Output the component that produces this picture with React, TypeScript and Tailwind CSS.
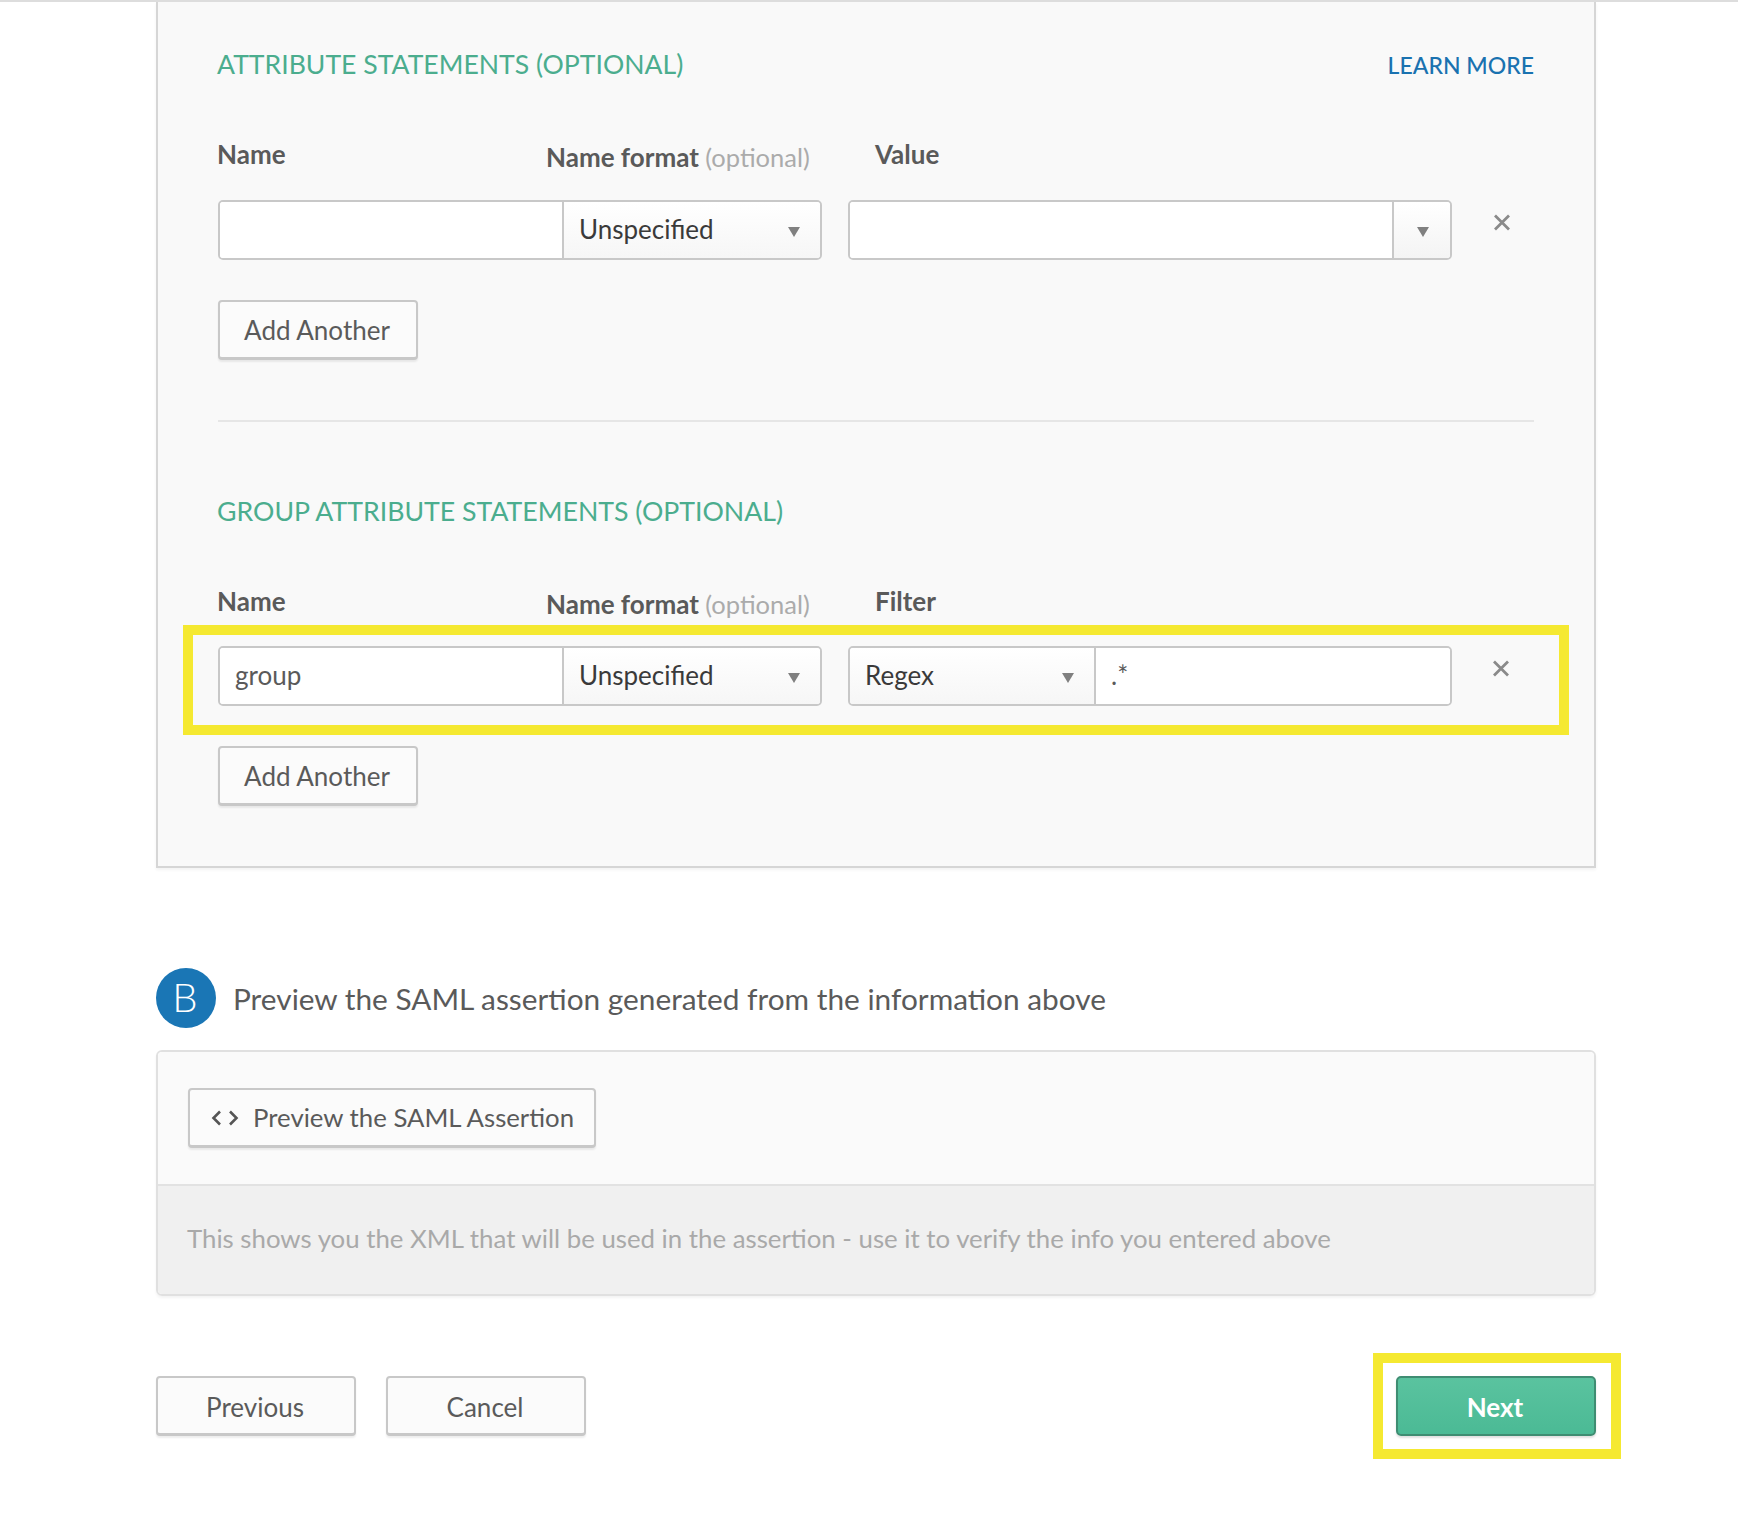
const font = "font-['Lato','Liberation_Sans',sans-serif]";

function Arrow() {
  return (
    <svg width="12" height="10" viewBox="0 0 12 10" className="shrink-0">
      <path d="M0 0H12L6 10Z" fill="#808080" />
    </svg>
  );
}

function Close({ ml }: { ml: string }) {
  return (
    <svg width="18" height="17" viewBox="0 0 18 17" className={`${ml} mt-[14px] shrink-0`}>
      <path d="M2 1.5L16 15.5M16 1.5L2 15.5" stroke="#8a8a8a" strokeWidth="2.8" fill="none" />
    </svg>
  );
}

function CodeIcon() {
  return (
    <svg width="28" height="16" viewBox="0 0 28 16" className="shrink-0">
      <path d="M9 1.5L2.5 8L9 14.5M19 1.5L25.5 8L19 14.5" stroke="#555" strokeWidth="2.6" fill="none" />
    </svg>
  );
}

function FormatSelect({ className, label }: { className: string; label: string }) {
  return (
    <div className={`${className} h-full flex items-center justify-between bg-gradient-to-b from-white to-[#f6f6f6] pl-[15px] text-[26px] text-[#3a3a3a]`}>
      <span className="-mt-[2px]">{label}</span>
      <span className="mr-[20px] mt-[3px]">
        <Arrow />
      </span>
    </div>
  );
}

function AddAnother() {
  return (
    <button className="w-[200px] h-[60px] pt-[2px] rounded-[4px] border-2 border-[#c8c8c8] border-b-[3px] bg-[#fbfbfb] shadow-[0_2px_2px_rgba(0,0,0,0.07)] text-[26px] text-[#5a5a5a]">
      <span className="-ml-[2px]">Add Another</span>
    </button>
  );
}

function Labels({ last }: { last: string }) {
  return (
    <div className="flex h-[30px] -mt-px text-[26px] font-bold text-[#5a5a5a] leading-[30px]">
      <div className="w-[328px] -ml-px mr-px">Name</div>
      <div className="w-[329px] mt-[3px] whitespace-nowrap">
        Name format <span className="font-normal text-[25.5px] text-[#ababab]">(optional)</span>
      </div>
      <div>{last}</div>
    </div>
  );
}

function FooterButton({ label }: { label: string }) {
  return (
    <button className="w-[200px] h-[60px] pt-[3px] rounded-[4px] border-2 border-[#c8c8c8] border-b-[3px] bg-[#fbfbfb] shadow-[0_2px_2px_rgba(0,0,0,0.07)] text-[26px] text-[#5a5a5a]">
      <span className="-ml-[2px]">{label}</span>
    </button>
  );
}

export default function App() {
  return (
    <div className={`${font} w-[1738px] h-[1526px] bg-white border-t-2 border-[#dddddd] overflow-hidden`}>
      <div className="ml-[156px] w-[1440px]">
        {/* attribute statements */}
        <div className="border-x-2 border-b-2 border-[#d6d6d6] bg-[#f9f9f9] px-[60px] pt-[45px] pb-[60px] shadow-[0_2px_3px_rgba(0,0,0,0.05)]">
          <div className="flex h-[36px] items-center justify-between">
            <h2 className="-ml-px text-[26.6px] font-normal text-[#4bad8e]">ATTRIBUTE STATEMENTS (OPTIONAL)</h2>
            <a className="text-[23px] font-medium text-[#1a72b0]">LEARN MORE</a>
          </div>
          <div className="mt-[57px]">
            <Labels last="Value" />
          </div>
          <div className="mt-[31px] flex h-[60px]">
            <div className="flex w-[604px] h-full rounded-[5px] border-2 border-[#c8c8c8] overflow-hidden bg-white">
              <div className="w-[344px] h-full border-r-2 border-[#c8c8c8] bg-white" />
              <FormatSelect className="flex-1" label="Unspecified" />
            </div>
            <div className="ml-[26px] flex w-[604px] h-full rounded-[5px] border-2 border-[#c8c8c8] overflow-hidden bg-white">
              <div className="flex-1 h-full bg-white" />
              <div className="w-[58px] h-full flex items-center justify-center border-l-2 border-[#c8c8c8] bg-gradient-to-b from-white to-[#f4f4f4]">
                <span className="mt-[3px] ml-[2px]">
                  <Arrow />
                </span>
              </div>
            </div>
            <Close ml="ml-[41px]" />
          </div>
          <div className="mt-[40px]">
            <AddAnother />
          </div>
          <div className="mt-[60px] h-[2px] bg-[#e6e6e6]" />

          {/* group attribute statements */}
          <h2 className="-ml-px mt-[71px] h-[36px] flex items-center text-[26.7px] font-normal text-[#4bad8e]">
            GROUP ATTRIBUTE STATEMENTS (OPTIONAL)
          </h2>
          <div className="mt-[58px]">
            <Labels last="Filter" />
          </div>
          <div className="relative mt-[30px] flex h-[60px]">
            <div className="flex w-[604px] h-full rounded-[5px] border-2 border-[#c8c8c8] overflow-hidden bg-white">
              <div className="w-[344px] h-full border-r-2 border-[#c8c8c8] bg-white pl-[15px] flex items-center text-[26px] text-[#5a5a5a]">
                <span className="-mt-[2px]">group</span>
              </div>
              <FormatSelect className="flex-1" label="Unspecified" />
            </div>
            <div className="ml-[26px] flex w-[604px] h-full rounded-[5px] border-2 border-[#c8c8c8] overflow-hidden bg-white">
              <FormatSelect className="w-[246px] border-r-2 border-[#c8c8c8]" label="Regex" />
              <div className="flex-1 h-full bg-white pl-[15px] flex items-center text-[26px] text-[#5a5a5a]">
                <span className="-mt-[2px]">.*</span>
              </div>
            </div>
            <Close ml="ml-[40px]" />
            <div className="absolute -left-[35px] -right-[35px] -top-[21px] -bottom-[29px] border-[10px] border-[#f5e931] pointer-events-none" />
          </div>
          <div className="mt-[40px]">
            <AddAnother />
          </div>
        </div>

        {/* preview */}
        <div className="mt-[100px] flex h-[60px] items-center">
          <div className="flex w-[60px] h-[60px] items-center justify-center rounded-full bg-[#1a76b5] text-[40px] font-light text-white">
            <span className="-mt-[3px] -ml-[2px]">B</span>
          </div>
          <div className="ml-[17px] mt-[2px] text-[29.8px] text-[#5a5a5a]">
            Preview the SAML assertion generated from the information above
          </div>
        </div>
        <div className="mt-[22px] rounded-[6px] border-2 border-[#e0e0e0] overflow-hidden shadow-[0_2px_3px_rgba(0,0,0,0.05)]">
          <div className="bg-[#fafafa] pl-[30px] py-[36px] border-b-2 border-[#e2e2e2]">
            <button className="flex w-[408px] h-[60px] items-center pl-[21px] rounded-[4px] border-2 border-[#c8c8c8] border-b-[3px] bg-[#fbfbfb] shadow-[0_2px_2px_rgba(0,0,0,0.07)] text-[25.75px] text-[#5a5a5a]">
              <CodeIcon />
              <span className="ml-[14px] whitespace-nowrap">Preview the SAML Assertion</span>
            </button>
          </div>
          <div className="flex h-[108px] items-center bg-[#f0f0f0] pl-[29px] text-[25.8px] text-[#a9a9a9]">
            <span className="-mt-[3px]">
              This shows you the XML that will be used in the assertion - use it to verify the info you entered above
            </span>
          </div>
        </div>

        {/* footer */}
        <div className="mt-[80px] flex justify-between">
          <div className="flex gap-[30px]">
            <FooterButton label="Previous" />
            <FooterButton label="Cancel" />
          </div>
          <div className="relative">
            <button className="w-[200px] h-[60px] pt-[2px] rounded-[5px] border-2 border-[#3f8d72] bg-gradient-to-b from-[#5ac39f] to-[#4bba95] shadow-[0_2px_2px_rgba(0,0,0,0.12)] text-[26px] font-bold text-white">
              <span className="-ml-[2px]">Next</span>
            </button>
            <div className="absolute -left-[23px] -right-[25px] -top-[23px] -bottom-[23px] border-[10px] border-[#f5e931] pointer-events-none" />
          </div>
        </div>
      </div>
    </div>
  );
}
